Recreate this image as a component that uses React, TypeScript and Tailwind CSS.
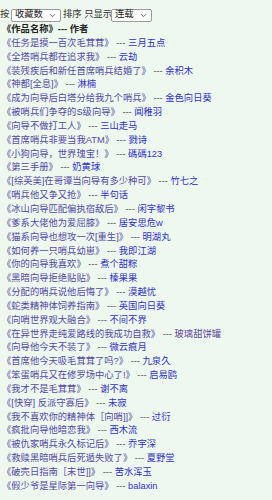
import React from 'react';

const rows: [string, string, boolean?][] = [
  ['任务是摸一百次毛茸茸', '三月五点'],
  ['全塔哨兵都在追求我', '云劫'],
  ['装残疾后和新任首席哨兵结婚了', '余积木'],
  ['神都[全息]', '淋楠'],
  ['成为向导后白塔分给我九个哨兵', '金色向日葵'],
  ['被哨兵们争夺的S级向导', '闻稚羽'],
  ['向导不做打工人', '三山走马'],
  ['首席哨兵非要当我ATM', '戮诗'],
  ['小狗向导，世界瑰宝！', '碼碼123'],
  ['第三手册', '奶黄球'],
  ['[综英美]在哥谭当向导有多少种可', '竹七之'],
  ['哨兵他又争又抢', '半句话'],
  ['冰山向导匹配偏执宿敌后', '闲字黎书'],
  ['爹系大佬他为爱屈膝', '居安思危w'],
  ['猫系向导也想攻一次[重生]', '明湖丸'],
  ['如何养一只哨兵幼崽', '我即江湖'],
  ['你的向导我喜欢', '煮个甜粽'],
  ['黑暗向导拒绝贴贴', '榛果果'],
  ['分配的哨兵说他后悔了', '漠越忧'],
  ['蛇类精神体饲养指南', '英国向日葵'],
  ['向哨世界观大融合', '不间不界'],
  ['在异世界走纯爱路线的我成功自救', '玻璃甜饼罐', true],
  ['向导他今天不装了', '微云痕月'],
  ['首席他今天吸毛茸茸了吗?', '九泉久'],
  ['笨蛋哨兵又在修罗场中心了!', '启易鸥'],
  ['我才不是毛茸茸', '谢不离'],
  ['[快穿] 反派守寡后', '未寂'],
  ['我不喜欢你的精神体［向哨]]', '过衍'],
  ['疯批向导他暗恋我', '西木流'],
  ['被仇家哨兵永久标记后', '乔宇深'],
  ['救赎黑暗哨兵后死遁失败了', '夏野堂'],
  ['破壳日指南［末世]]', '苦水浑玉'],
  ['假少爷是星际第一向导', 'balaxin'],
];

const Chevron = () => (
  <svg width="7" height="5" viewBox="0 0 7 5" className="shrink-0">
    <path d="M1 1.2 L3.5 3.7 L6 1.2" fill="none" stroke="#555" strokeWidth="0.9" />
  </svg>
);

const FakeSelect = ({ value, w }: { value: string; w: string }) => (
  <div className={`${w} h-[13px] flex items-center justify-between bg-white border border-[#9a9a9a] rounded-[2px] pl-[3px] pr-[4px] text-[#222]`}>
    <span>{value}</span>
    <Chevron />
  </div>
);

export default function App() {
  return (
    <div
      className="min-h-[500px] w-[272px] bg-[#eef8ee] pt-[8px] text-[9.3px] leading-[13.85px] text-[#333] overflow-hidden"
      style={{ fontFamily: '"Liberation Sans", "Noto Sans CJK SC", sans-serif' }}
    >
      <div className="h-[14px] flex items-center">
        <span className="w-[11px]">按</span>
        <FakeSelect value="收藏数" w="w-[50px]" />
        <span className="ml-[2px] w-[48px] whitespace-nowrap">排序 只显示</span>
        <FakeSelect value="连载" w="w-[41px]" />
      </div>
      <ul className="pt-[1px]">
        <li className="pl-[2px] font-bold text-[#222]">《作品名称》--- 作者</li>
        {rows.map(([t, a, visited], i) => (
          <li key={i} className="pl-[2px] whitespace-nowrap">
            <a className="text-[#5448a8]">《{t}》</a>
            <span className="text-[#555]"> --- </span>
            <a className={visited ? 'text-[#5f4a9e]' : 'text-[#3030c8]'}>{a}</a>
          </li>
        ))}
      </ul>
    </div>
  );
}
